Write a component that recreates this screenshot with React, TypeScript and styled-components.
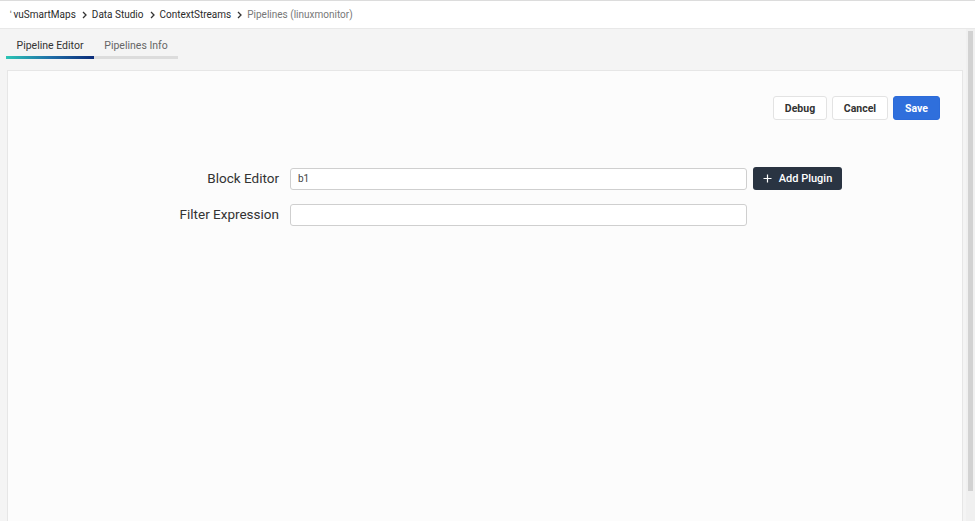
import React from 'react';
import styled, { createGlobalStyle } from 'styled-components';

const GlobalStyle = createGlobalStyle`
  html, body {
    margin: 0;
    padding: 0;
    height: 100%;
    background: #f4f4f4;
    font-family: Roboto, "Noto Sans", sans-serif;
    color: #333;
    overflow: hidden;
  }
  #root {
    height: 100%;
  }
`;

const Page = styled.div`
  display: flex;
  flex-direction: column;
  height: 521px;
`;

const TopBar = styled.div`
  height: 27px;
  background: #fff;
  border-top: 1px solid #dcdcdc;
  border-bottom: 1px solid #e8e8e8;
  display: flex;
  align-items: center;
  padding-left: 10px;
  font-size: 10px;
  flex-shrink: 0;
`;

const Crumb = styled.span<{ $current?: boolean }>`
  color: ${(p) => (p.$current ? '#777' : '#2a2a2a')};
  font-weight: 400;
`;

const Chevron = styled.span`
  display: inline-flex;
  margin: 0 4px 0 5px;
  color: #333;
`;

const Body = styled.div`
  flex: 1;
  display: flex;
  min-height: 0;
`;

const Content = styled.div`
  flex: 1;
  display: flex;
  flex-direction: column;
  padding-left: 7px;
  padding-right: 3px;
`;

const Tabs = styled.div`
  height: 41px;
  display: flex;
  align-items: flex-end;
  flex-shrink: 0;
`;

const TabList = styled.div`
  display: flex;
  margin-left: -1px;
  margin-bottom: 11px;
`;

const Tab = styled.div<{ $active?: boolean; $w: number }>`
  width: ${(p) => p.$w}px;
  text-align: center;
  font-size: 10.5px;
  color: ${(p) => (p.$active ? '#333' : '#666')};
  padding-bottom: 4px;
  border-bottom: 3px solid #dcdcdc;
  border-image: ${(p) =>
    p.$active ? 'linear-gradient(90deg, #2cc7b5, #1f6fa8 50%, #0b2a78) 1' : 'none'};
`;

const Card = styled.div`
  flex: 1;
  background: #fcfcfc;
  border: 1px solid #e6e6e6;
  border-bottom: none;
  padding: 25px 22px 0 0;
  display: flex;
  flex-direction: column;
`;

const Toolbar = styled.div`
  display: flex;
  justify-content: flex-end;
  gap: 5px;
`;

const Button = styled.button<{ $primary?: boolean; $w: number }>`
  height: 24px;
  width: ${(p) => p.$w}px;
  padding: 0;
  font-family: inherit;
  font-size: 10.5px;
  font-weight: 700;
  border-radius: 3px;
  border: 1px solid ${(p) => (p.$primary ? '#2c6bd9' : '#e3e3e3')};
  background: ${(p) => (p.$primary ? '#2f6fdc' : '#fff')};
  color: ${(p) => (p.$primary ? '#fff' : '#333')};
`;

const Form = styled.div`
  margin-top: 47px;
  display: grid;
  grid-template-columns: 130px 457px auto;
  column-gap: 11px;
  row-gap: 14px;
  padding-left: 141px;
  align-items: center;
`;

const Label = styled.label`
  text-align: right;
  font-size: 13.5px;
  color: #333;
  margin-top: -2px;
`;

const Input = styled.div`
  height: 22px;
  box-sizing: border-box;
  border: 1px solid #cfcfcf;
  border-radius: 3px;
  background: #fff;
  display: flex;
  align-items: center;
  padding-left: 7px;
  font-size: 10px;
  color: #444;
`;

const AddButton = styled.button`
  height: 23px;
  width: 89px;
  margin-left: -5px;
  background: #2a3442;
  color: #fff;
  border: none;
  border-radius: 3px;
  font-family: inherit;
  font-size: 11px;
  font-weight: 500;
  display: flex;
  align-items: center;
  justify-content: center;
  gap: 7px;
`;

const Scrollbar = styled.div`
  width: 9px;
  background: #f0f0f0;
  display: flex;
  justify-content: center;
  padding-top: 2px;
  flex-shrink: 0;
`;

const Thumb = styled.div`
  width: 5px;
  height: 460px;
  background: #d2d2d2;
`;

const Tick = styled.span`
  color: #666;
  font-size: 9px;
  margin-right: 2px;
`;

const ChevronIcon = () => (
  <svg width="7" height="8" viewBox="0 0 7 8">
    <path d="M2 1l3 3-3 3" stroke="#333" strokeWidth="1.3" fill="none" />
  </svg>
);

const PlusIcon = () => (
  <svg width="9" height="9" viewBox="0 0 9 9">
    <path d="M4.5 0.5v8M0.5 4.5h8" stroke="#fff" strokeWidth="1.2" />
  </svg>
);

const crumbs = ['vuSmartMaps', 'Data Studio', 'ContextStreams'];

export default function App() {
  return (
    <>
      <GlobalStyle />
      <Page>
        <TopBar>
          <Tick>ˈ</Tick>
          {crumbs.map((c) => (
            <React.Fragment key={c}>
              <Crumb>{c}</Crumb>
              <Chevron>
                <ChevronIcon />
              </Chevron>
            </React.Fragment>
          ))}
          <Crumb $current>Pipelines (linuxmonitor)</Crumb>
        </TopBar>
        <Body>
          <Content>
            <Tabs>
              <TabList>
                <Tab $active $w={88}>Pipeline Editor</Tab>
                <Tab $w={84}>Pipelines Info</Tab>
              </TabList>
            </Tabs>
            <Card>
              <Toolbar>
                <Button $w={54}>Debug</Button>
                <Button $w={56}>Cancel</Button>
                <Button $primary $w={47}>Save</Button>
              </Toolbar>
              <Form>
                <Label>Block Editor</Label>
                <Input>b1</Input>
                <AddButton>
                  <PlusIcon />
                  Add Plugin
                </AddButton>
                <Label>Filter Expression</Label>
                <Input />
                <span />
              </Form>
            </Card>
          </Content>
          <Scrollbar>
            <Thumb />
          </Scrollbar>
        </Body>
      </Page>
    </>
  );
}
